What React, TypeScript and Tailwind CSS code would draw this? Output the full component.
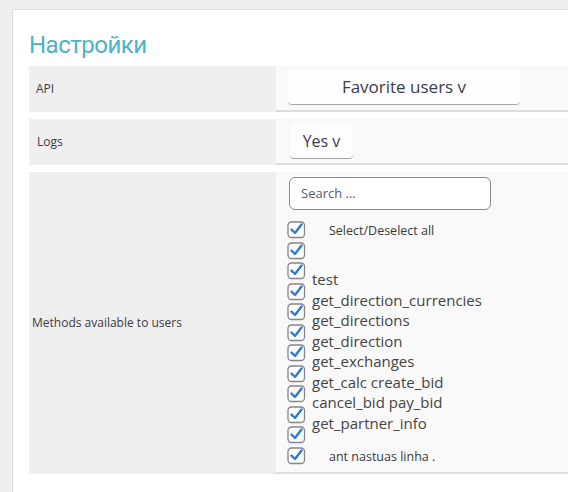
import React from 'react'

const METHODS: { label: string; small?: boolean }[] = [
  { label: 'Select/Deselect all', small: true },
  { label: '' },
  { label: 'test' },
  { label: 'get_direction_currencies' },
  { label: 'get_directions' },
  { label: 'get_direction' },
  { label: 'get_exchanges' },
  { label: 'get_calc create_bid' },
  { label: 'cancel_bid pay_bid' },
  { label: 'get_partner_info' },
  { label: '' },
  { label: 'ant nastuas linha .', small: true },
]

/** チェック済みボックス */
function CheckBox() {
  return (
    <svg width="20" height="18" viewBox="0 0 20 18" className="shrink-0">
      <rect x="1" y="1" width="16.5" height="15.5" rx="3.5" fill="#fff" stroke="#84848a" strokeWidth="1.3" />
      <path d="M4.5 8.6 L8 12 L14.5 3.5" fill="none" stroke="#2f7bd4" strokeWidth="2.4" strokeLinecap="round" strokeLinejoin="round" />
    </svg>
  )
}

function Row({ label, height, pad, children }: { label: string; height: string; pad: string; children: React.ReactNode }) {
  return (
    <div className={`flex ${height}`}>
      <div className={`w-[247px] shrink-0 bg-[#efefef] flex items-center ${pad} text-[12px] text-[#3e3a48]`}>
        {label}
      </div>
      <div className="flex-1 bg-[#f9f9f9] border-b-2 border-[#dcdcdc]">{children}</div>
    </div>
  )
}

export default function App() {
  return (
    <div
      className="h-[492px] overflow-hidden bg-[#efefef] pt-[9px] pl-[12px]"
      style={{ fontFamily: '"Open Sans", "Noto Sans", sans-serif' }}
    >
      <div className="h-[500px] bg-white border-l border-t border-[#dcdcdc] pl-[16px] pt-[20px]">
        <h1
          className="text-[24px] leading-[30px] tracking-[-0.5px] text-[#4ab3c8] mb-[6px]"
          style={{ fontFamily: 'Roboto, "Open Sans", sans-serif' }}
        >
          Настройки
        </h1>
        <div className="flex flex-col gap-[7px]">
          {/* API */}
          <Row label="API" height="h-[46px]" pad="pl-[7px]">
            <div className="ml-[12px] mt-[4px] w-[232px] h-[34px] bg-white/70 rounded-sm shadow-[0_1px_0_#a5a5a5] flex items-center justify-center text-[17px] text-[#3d3a50]">
              Favorite users v
            </div>
          </Row>

          {/* Logs */}
          <Row label="Logs" height="h-[46px]" pad="pl-[8px]">
            <div className="ml-[14px] mt-[5px] w-[63px] h-[34px] bg-white/70 rounded-sm shadow-[0_1px_0_#a5a5a5] flex items-center justify-center text-[16px] text-[#3d3a50]">
              Yes v
            </div>
          </Row>

          {/* Methods */}
          <Row label="Methods available to users" height="h-[302px]" pad="pl-[3px]">
            <div className="pl-[11px] pt-[5px]">
              <div className="ml-[2px] w-[202px] h-[33px] rounded-md border border-[#8a8a8f] bg-white flex items-center pl-[11px] text-[13px] text-[#5e5a6e]">
                Search ...
              </div>
              <div className="mt-[11px] h-[250px] overflow-hidden flex flex-col">
                {METHODS.map((m, i) => (
                  <div key={i} className="h-[20.5px] shrink-0 flex items-start">
                    <CheckBox />
                    {m.small ? (
                      <span className="ml-[22px] mt-[2px] text-[12.5px] leading-[16px] text-[#3a3a3a]">{m.label}</span>
                    ) : (
                      <span className="ml-[5px] mt-[8px] text-[15px] leading-[18px] text-[#454545]">{m.label}</span>
                    )}
                  </div>
                ))}
              </div>
            </div>
          </Row>
        </div>
      </div>
    </div>
  )
}
